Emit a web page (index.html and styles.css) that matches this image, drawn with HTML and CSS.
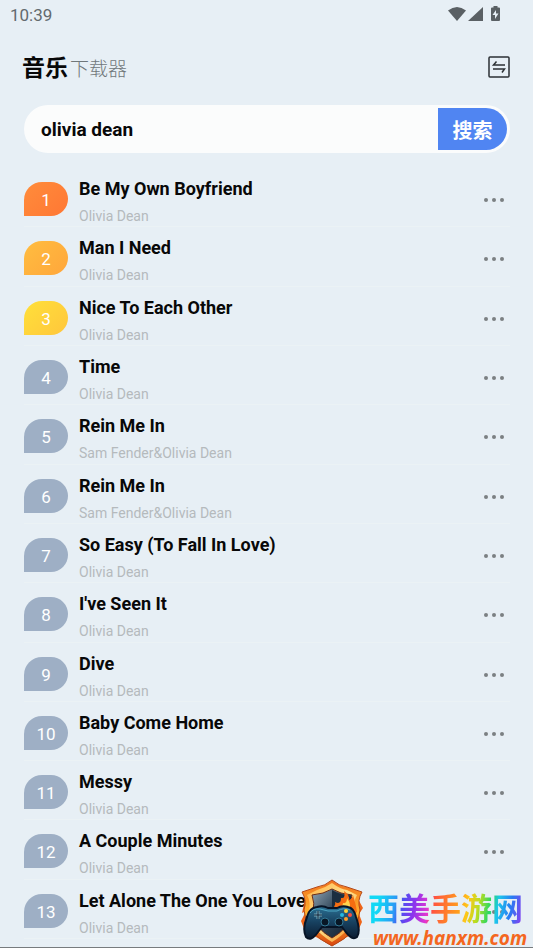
FILE: index.html
```html
<!doctype html>
<html lang="zh-CN">
<head>
    <title>音乐下载器</title>
    <meta charset="utf-8">
    <meta name="viewport" content="width=device-width, initial-scale=1">
    <link rel="stylesheet" href="styles.css">
</head>
<body>
    <div class="page">
        <div class="status">
            <span>10:39</span>
            <svg class="status-icons" viewBox="0 0 54 16" aria-hidden="true">
                <path d="M0 4.500Q9 -2.500 18 4.500L9 15Z"/>
                <path d="M35 1V15H20Z"/>
                <path fill-rule="evenodd" d="M45.500 0H49.500V1.500H51Q52 1.500 52 2.500V14Q52 15 51 15H44Q43 15 43 14V2.500Q43 1.500 44 1.500H45.500ZM48 4L44.500 9H47V13L50.500 7.500H48Z"/>
            </svg>
        </div>
        <header class="header">
            <h1><strong>音乐</strong><span>下载器</span></h1>
            <button class="switch" type="button" aria-label="切换">
                <svg viewBox="0 0 22 22">
                    <rect x="1" y="1" width="20" height="20" rx="1"/>
                    <path d="M17 9H5.500L8.500 5.500M5 13H16.500L14 16.500"/>
                </svg>
            </button>
        </header>
        <form class="search">
            <input type="text" value="olivia dean" aria-label="搜索歌曲">
            <button type="submit">搜索</button>
        </form>
        <ol class="songs">
            <li class="song">
                <span class="rank first">1</span>
                <div class="info"><h2>Be My Own Boyfriend</h2><p>Olivia Dean</p></div>
                <button class="more" type="button" aria-label="更多"><i></i><i></i><i></i></button>
            </li>
            <li class="song">
                <span class="rank second">2</span>
                <div class="info"><h2>Man I Need</h2><p>Olivia Dean</p></div>
                <button class="more" type="button" aria-label="更多"><i></i><i></i><i></i></button>
            </li>
            <li class="song">
                <span class="rank third">3</span>
                <div class="info"><h2>Nice To Each Other</h2><p>Olivia Dean</p></div>
                <button class="more" type="button" aria-label="更多"><i></i><i></i><i></i></button>
            </li>
            <li class="song">
                <span class="rank">4</span>
                <div class="info"><h2>Time</h2><p>Olivia Dean</p></div>
                <button class="more" type="button" aria-label="更多"><i></i><i></i><i></i></button>
            </li>
            <li class="song">
                <span class="rank">5</span>
                <div class="info"><h2>Rein Me In</h2><p>Sam Fender&amp;Olivia Dean</p></div>
                <button class="more" type="button" aria-label="更多"><i></i><i></i><i></i></button>
            </li>
            <li class="song">
                <span class="rank">6</span>
                <div class="info"><h2>Rein Me In</h2><p>Sam Fender&amp;Olivia Dean</p></div>
                <button class="more" type="button" aria-label="更多"><i></i><i></i><i></i></button>
            </li>
            <li class="song">
                <span class="rank">7</span>
                <div class="info"><h2>So Easy (To Fall In Love)</h2><p>Olivia Dean</p></div>
                <button class="more" type="button" aria-label="更多"><i></i><i></i><i></i></button>
            </li>
            <li class="song">
                <span class="rank">8</span>
                <div class="info"><h2>I've Seen It</h2><p>Olivia Dean</p></div>
                <button class="more" type="button" aria-label="更多"><i></i><i></i><i></i></button>
            </li>
            <li class="song">
                <span class="rank">9</span>
                <div class="info"><h2>Dive</h2><p>Olivia Dean</p></div>
                <button class="more" type="button" aria-label="更多"><i></i><i></i><i></i></button>
            </li>
            <li class="song">
                <span class="rank">10</span>
                <div class="info"><h2>Baby Come Home</h2><p>Olivia Dean</p></div>
                <button class="more" type="button" aria-label="更多"><i></i><i></i><i></i></button>
            </li>
            <li class="song">
                <span class="rank">11</span>
                <div class="info"><h2>Messy</h2><p>Olivia Dean</p></div>
                <button class="more" type="button" aria-label="更多"><i></i><i></i><i></i></button>
            </li>
            <li class="song">
                <span class="rank">12</span>
                <div class="info"><h2>A Couple Minutes</h2><p>Olivia Dean</p></div>
                <button class="more" type="button" aria-label="更多"><i></i><i></i><i></i></button>
            </li>
            <li class="song">
                <span class="rank">13</span>
                <div class="info"><h2>Let Alone The One You Love</h2><p>Olivia Dean</p></div>
                <button class="more" type="button" aria-label="更多"><i></i><i></i><i></i></button>
            </li>
        </ol>
        <div class="brand">
            <svg class="brand-logo" viewBox="0 0 62 68" aria-hidden="true">
                <defs>
                    <linearGradient id="flame" x1="0" y1="0" x2="0" y2="1">
                        <stop offset="0" stop-color="#f0701c"/>
                        <stop offset=".5" stop-color="#ffb02e"/>
                        <stop offset="1" stop-color="#d8460f"/>
                    </linearGradient>
                    <linearGradient id="gold" x1="0" y1="0" x2="1" y2="1">
                        <stop offset="0" stop-color="#ffb347"/>
                        <stop offset=".5" stop-color="#ffe08a"/>
                        <stop offset="1" stop-color="#f58a1f"/>
                    </linearGradient>
                    <linearGradient id="steel" x1="0" y1="0" x2="1" y2="1">
                        <stop offset="0" stop-color="#92a6b5"/>
                        <stop offset=".45" stop-color="#33495c"/>
                        <stop offset="1" stop-color="#101c2c"/>
                    </linearGradient>
                    <linearGradient id="pad" x1="0" y1="0" x2="0" y2="1">
                        <stop offset="0" stop-color="#2b7194"/>
                        <stop offset=".5" stop-color="#17405f"/>
                        <stop offset="1" stop-color="#0b1b30"/>
                    </linearGradient>
                </defs>
                <path fill="#ee6418" d="M4 20L1 34L5 32L0 42L5 55L15 58L31 67L46 58L56 54L61 43L58 35L62 29L57 20Z"/>
                <path fill="url(#flame)" stroke="#b4481a" d="M31 1Q38 7 46 8L61 13Q56 21 59 31Q58 54 31 67Q4 54 3 31Q6 21 1 13L16 8Q24 7 31 1Z"/>
                <path fill="url(#gold)" d="M31 4Q39 10 46 11L56 16Q52 23 54 32Q53 50 31 63Q9 50 8 32Q10 23 6 16L16 11Q24 9 31 4Z"/>
                <path fill="url(#steel)" stroke="#6b2b17" d="M31 10Q39 15 51 16Q48 24 50 33Q49 49 31 59Q13 49 12 33Q14 24 11 16Q23 15 31 10Z"/>
                <path fill="#1b2e40" d="M31 11Q39 16 50 17V29H31Z"/>
                <path fill="#f56d12" d="M27 31Q36 28 34 23Q40 26 40 19Q45 20 43 12Q49 16 48 21Q52 19 52 16Q55 26 56 33L50 37H31Z"/>
                <path fill="#ffd44d" d="M35 31Q42 29 42 24Q46 25 46 19Q51 26 48 33Z"/>
                <path fill="url(#pad)" stroke="#071426" stroke-width="2" d="M16 28Q22 26 27 29H36Q41 26 47 28Q53 29 55 38Q60 52 56 58Q51 62 44 52L41 48H21L17 53Q10 63 5 58Q1 50 6 38Q8 29 16 28Z"/>
                <path fill="none" stroke="#4da5c2" d="M9 34Q12 29 19 30L27 32H36Q43 28 49 31"/>
                <g fill="#081726" stroke="#337895">
                    <circle cx="24" cy="43" r="4"/>
                    <circle cx="38" cy="43" r="4"/>
                </g>
                <path fill="none" stroke="#75a8b9" stroke-width="3" d="M17 32V40M13 36H21"/>
                <path fill="none" stroke="#102339" d="M17 32V40M13 36H21"/>
                <circle cx="45" cy="32" r="2" fill="#ffd136"/>
                <circle cx="49" cy="36" r="2" fill="#ff4f3e"/>
                <circle cx="45" cy="40" r="2" fill="#ff9e27"/>
                <circle cx="41" cy="36" r="2" fill="#24b9e0"/>
            </svg>
            <div class="brand-text">
                <div class="brand-name">西美手游网</div>
                <div class="brand-url">www.hanxm.com</div>
            </div>
        </div>
    </div>
</body>
</html>
```
FILE: styles.css
```css
* {
    box-sizing: border-box;
}

body {
    margin: 0;
    background: #e7eff5;
    font-family: Roboto, "Noto Sans CJK SC", sans-serif;
    color: #080808;
}

h1, h2, p, ol {
    margin: 0;
    padding: 0;
}

button, input {
    border: 0;
    padding: 0;
    background: none;
    font-family: inherit;
    color: inherit;
}

button {
    cursor: pointer;
}

.page {
    display: flex;
    flex-direction: column;
    position: relative;
    min-height: 100vh;
    padding-bottom: 8px;
    border-bottom: 1px solid #777b7e;
    overflow: hidden;
}

/* status bar */
.status {
    display: flex;
    justify-content: space-between;
    align-items: center;
    height: 30px;
    padding: 0 31px 0 10px;
    font-size: 17px;
    color: #636a6e;
}

.status-icons {
    width: 54px;
    height: 16px;
    margin-bottom: 2px;
    fill: #5a6064;
}

/* header */
.header {
    display: flex;
    justify-content: space-between;
    align-items: center;
    height: 74px;
    padding: 0 23px 0 22px;
}

.header h1 {
    display: flex;
    align-items: baseline;
    gap: 2px;
    padding-top: 4px;
    line-height: 32px;
    font-size: 19px;
    font-weight: 300;
    color: #70777a;
}

.header strong {
    font-size: 23px;
    font-weight: 700;
    color: #080808;
}

.switch {
    width: 22px;
    height: 22px;
}

.switch svg {
    display: block;
    fill: none;
    stroke: #2c3134;
    stroke-width: 1.5;
}

/* search */
.search {
    display: flex;
    height: 48px;
    margin: 1px 23px 15px 24px;
    padding: 3px;
    border-radius: 24px;
    background: #fbfcfc;
}

.search input {
    flex: 1;
    min-width: 0;
    padding-left: 14px;
    font-size: 19px;
    font-weight: 700;
    outline: none;
}

.search button {
    width: 69px;
    border-radius: 0 21px 21px 0;
    background: #5085f2;
    font-size: 20px;
    font-weight: 700;
    color: white;
}

/* songs */
.songs {
    display: flex;
    flex: 1;
    flex-direction: column;
    padding: 0 23px 0 24px;
    list-style: none;
}

.song {
    display: flex;
    flex: 1;
    gap: 11px;
    padding-top: 9px;
    border-bottom: 1px solid #ebf2f5;
}

.rank {
    width: 44px;
    height: 34px;
    margin-top: 5px;
    border-radius: 18px 17px 17px 0;
    background: #9eafc5;
    line-height: 36px;
    font-size: 17px;
    text-align: center;
    color: white;
}

.rank.first {
    background: linear-gradient(135deg, #ff8c3b, #ff7734);
}

.rank.second {
    background: linear-gradient(135deg, #ffbd40, #ffa63b);
}

.rank.third {
    background: linear-gradient(135deg, #ffe03a, #ffc63c);
}

.info {
    flex: 1;
    min-width: 0;
}

.info h2 {
    line-height: 24px;
    font-size: 18px;
    font-weight: 700;
    white-space: nowrap;
}

.info p {
    margin-top: 6px;
    line-height: 18px;
    font-size: 14px;
    color: #b5babd;
}

.more {
    display: flex;
    align-items: center;
    gap: 4px;
    height: 46px;
    padding: 0 6px;
}

.more i {
    width: 4px;
    height: 4px;
    border-radius: 50%;
    background: #7b8082;
}

/* site mark over the bottom corner */
.brand {
    display: flex;
    align-items: flex-end;
    gap: 5px;
    position: absolute;
    right: 5px;
    bottom: 0;
}

.brand-logo {
    width: 62px;
    height: 68px;
}

.brand-text {
    width: 160px;
}

.brand-name {
    width: fit-content;
    line-height: 38px;
    font-size: 31px;
    font-weight: 700;
    white-space: nowrap;
    background: linear-gradient(100deg, #12d8f5 8%, #2a9bf5 18%, #4852f0 22%, #8a35ee 30%, #e536d0 39%, #ff553f 42%, #ff9e1c 58%, #ffc619 63%, #b9dd21 70%, #2cd860 77%, #1cc6ec 82%, #287cf3 90%, #9c32ef);
    background-clip: text;
    -webkit-background-clip: text;
    color: transparent;
}

.brand-url {
    padding-left: 5px;
    line-height: 18px;
    font-family: "Noto Sans", sans-serif;
    font-size: 19px;
    font-style: italic;
    font-weight: 700;
    color: #f4671f;
}
```
